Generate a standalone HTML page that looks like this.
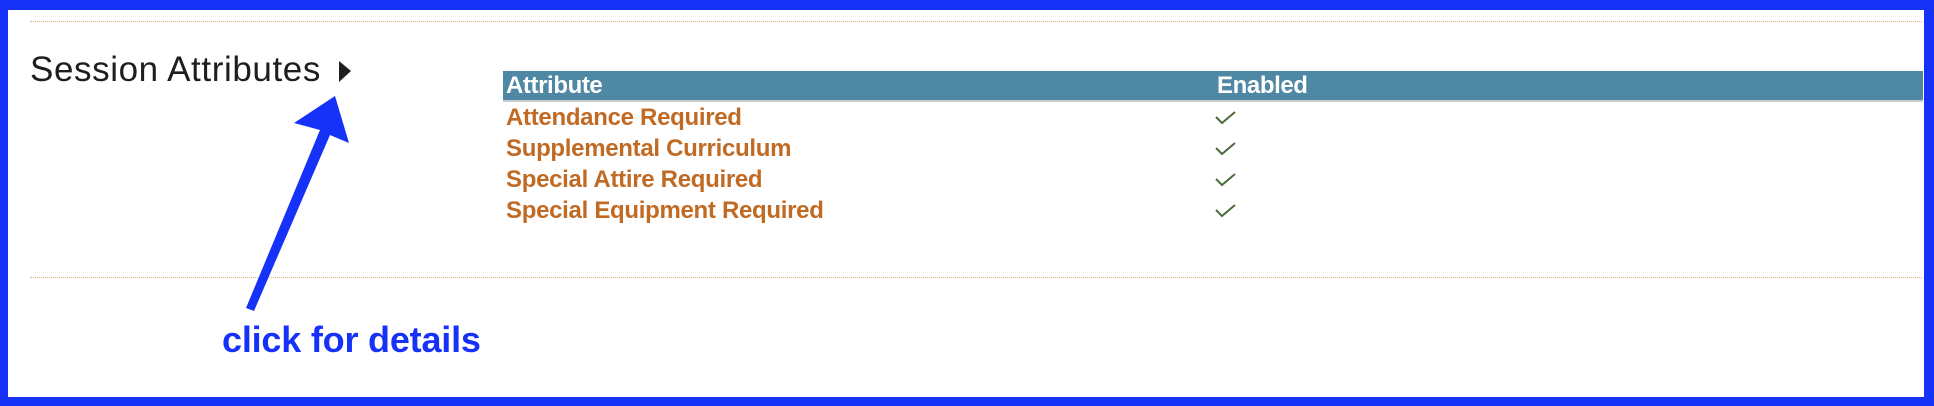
<!DOCTYPE html>
<html><head><meta charset="utf-8"><style>
*{margin:0;padding:0;box-sizing:border-box}
html,body{width:1934px;height:406px;overflow:hidden;background:#1732f8}
#inner{position:absolute;left:8px;top:10px;width:1916px;height:387px;background:#fff}
.dl{position:absolute;left:30px;width:1892px;border-top:1px dotted #e0b07a}
.t{position:absolute;font-family:"Liberation Sans",sans-serif;white-space:nowrap}
#title{left:30px;top:50px;font-size:35px;color:#1e1e1e;letter-spacing:0.6px}
#hdr{position:absolute;left:503px;top:71px;width:1420px;height:31px;background:#4e88a4;border-bottom:2px solid #c6ccd0}
.h{color:#fff;font-weight:bold;font-size:24px;top:72px;letter-spacing:-0.4px}
.r{color:#c06a24;font-weight:bold;font-size:24px;left:506px;letter-spacing:-0.3px}
.ck{position:absolute;left:1214px}
#click{left:222px;top:319px;font-size:36px;font-weight:bold;color:#1732f8;letter-spacing:-0.2px}
</style></head><body>
<div id="inner"></div>
<div class="dl" style="top:21px"></div>
<div class="dl" style="top:277px"></div>
<div class="t" id="title">Session Attributes</div>
<svg style="position:absolute;left:0;top:0" width="1934" height="406">
<polygon points="339,61 351,71 339,82" fill="#1e1e1e"/>
<polygon points="335,96 349,143 330,135 254,311 246,308 320,130 294,123" fill="#1732f8"/>
</svg>
<div id="hdr"></div>
<div class="t h" style="left:506px">Attribute</div>
<div class="t h" style="left:1217px">Enabled</div>
<div class="t r" style="top:104px">Attendance Required</div>
<div class="t r" style="top:135px">Supplemental Curriculum</div>
<div class="t r" style="top:166px">Special Attire Required</div>
<div class="t r" style="top:197px">Special Equipment Required</div>
<svg class="ck" style="top:110px" width="24" height="16"><path d="M2 7 L8 13 L21 2" stroke="#4c6a3c" stroke-width="2" fill="none"/></svg>
<svg class="ck" style="top:141px" width="24" height="16"><path d="M2 7 L8 13 L21 2" stroke="#4c6a3c" stroke-width="2" fill="none"/></svg>
<svg class="ck" style="top:172px" width="24" height="16"><path d="M2 7 L8 13 L21 2" stroke="#4c6a3c" stroke-width="2" fill="none"/></svg>
<svg class="ck" style="top:203px" width="24" height="16"><path d="M2 7 L8 13 L21 2" stroke="#4c6a3c" stroke-width="2" fill="none"/></svg>
<div class="t" id="click">click for details</div>
</body></html>
